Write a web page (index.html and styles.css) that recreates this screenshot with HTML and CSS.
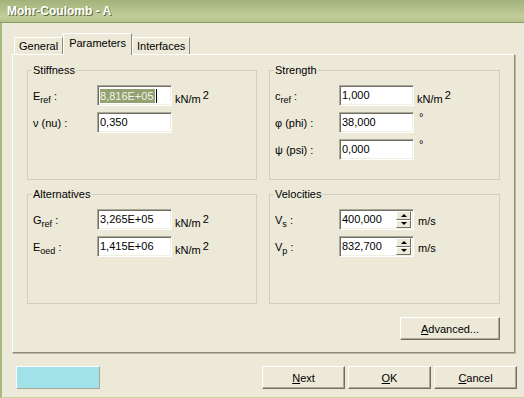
FILE: index.html
```html
<!DOCTYPE html>
<html lang="en">
<head>
    <meta charset="UTF-8">
    <title>Mohr-Coulomb - A</title>
    <link rel="stylesheet" href="styles.css">
</head>
<body>
    <div class="window">
        <div class="titlebar">
            <span class="title">Mohr-Coulomb - A</span>
        </div>
        <div class="frame">
            <div class="tabs">
                <div class="tab">General</div>
                <div class="tab active">Parameters</div>
                <div class="tab">Interfaces</div>
            </div>
            <div class="panel">
                <div class="groups">
                    <div class="group">
                        <div class="group-title">Stiffness</div>
                        <div class="row">
                            <span class="label">E<sub>ref</sub> :</span>
                            <span class="field"><span class="selected">8,816E+05</span><span class="caret"></span></span>
                            <span class="unit">kN/m<sup>2</sup></span>
                        </div>
                        <div class="row">
                            <span class="label">&nu; (nu) :</span>
                            <span class="field">0,350</span>
                        </div>
                    </div>
                    <div class="group">
                        <div class="group-title">Strength</div>
                        <div class="row">
                            <span class="label">c<sub>ref</sub> :</span>
                            <span class="field">1,000</span>
                            <span class="unit">kN/m<sup>2</sup></span>
                        </div>
                        <div class="row">
                            <span class="label">&phi; (phi) :</span>
                            <span class="field">38,000</span>
                            <span class="unit degree">&deg;</span>
                        </div>
                        <div class="row">
                            <span class="label">&psi; (psi) :</span>
                            <span class="field">0,000</span>
                            <span class="unit degree">&deg;</span>
                        </div>
                    </div>
                    <div class="group">
                        <div class="group-title">Alternatives</div>
                        <div class="row">
                            <span class="label">G<sub>ref</sub> :</span>
                            <span class="field">3,265E+05</span>
                            <span class="unit">kN/m<sup>2</sup></span>
                        </div>
                        <div class="row">
                            <span class="label">E<sub>oed</sub> :</span>
                            <span class="field">1,415E+06</span>
                            <span class="unit">kN/m<sup>2</sup></span>
                        </div>
                    </div>
                    <div class="group">
                        <div class="group-title">Velocities</div>
                        <div class="row">
                            <span class="label">V<sub>s</sub> :</span>
                            <span class="field">400,000
                                <span class="spin"><span class="spin-btn up"></span><span class="spin-btn down"></span></span>
                            </span>
                            <span class="unit plain">m/s</span>
                        </div>
                        <div class="row">
                            <span class="label">V<sub>p</sub> :</span>
                            <span class="field">832,700
                                <span class="spin"><span class="spin-btn up"></span><span class="spin-btn down"></span></span>
                            </span>
                            <span class="unit plain">m/s</span>
                        </div>
                    </div>
                </div>
                <div class="panel-actions">
                    <button class="btn btn-wide"><u>A</u>dvanced...</button>
                </div>
            </div>
            <div class="footer">
                <div class="swatch"></div>
                <div class="buttons">
                    <button class="btn"><u>N</u>ext</button>
                    <button class="btn"><u>O</u>K</button>
                    <button class="btn"><u>C</u>ancel</button>
                </div>
            </div>
        </div>
    </div>
</body>
</html>
```

FILE: styles.css
```css
body {
    margin: 0;
    background-color: #ece9d8;
    font-family: 'Liberation Sans', Tahoma, sans-serif;
    font-size: 11px;
    color: #000;
}
.window {
    width: 524px;
    height: 398px;
    display: flex;
    flex-direction: column;
    overflow: hidden;
}
.titlebar {
    height: 22px;
    border-bottom: 1px solid #8b9b63;
    background: linear-gradient(#a2b27a, #b3c08a 40%, #c3cd9b 75%, #b5c28c);
    display: flex;
    align-items: center;
    padding-left: 7px;
}
.title {
    color: #fff;
    font-weight: bold;
    font-size: 12px;
    text-shadow: 1px 1px #5e6c3e;
}
.frame {
    flex: 1;
    border-left: 2px solid #a8b97f;
    border-bottom: 1px solid #c9d1a3;
    padding: 10px 7px 0 10px;
    display: flex;
    flex-direction: column;
}
.tabs {
    display: flex;
    align-items: flex-end;
    height: 21px;
    padding-left: 2px;
    position: relative;
    z-index: 1;
}
.tab {
    height: 16px;
    line-height: 16px;
    padding: 0 4px;
    border: 1px solid #fff;
    border-right-color: #8c8c7c;
    border-bottom: none;
}
.tab.active {
    height: 21px;
    line-height: 19px;
    margin-bottom: -1px;
    background-color: #ece9d8;
    padding: 0 5px;
}
.panel {
    width: 503px;
    height: 299px;
    box-sizing: border-box;
    border: 1px solid #fff;
    border-right-color: #8c8c7c;
    border-bottom-color: #8c8c7c;
    box-shadow: 1px 1px #bdb9a6;
    padding: 15px 14px 0 14px;
}
.groups {
    display: grid;
    grid-template-columns: 230px 231px;
    grid-template-rows: 110px 110px;
    column-gap: 12px;
    row-gap: 14px;
}
.group {
    border: 1px solid #d0d0bf;
    padding: 0 5px;
    display: flex;
    flex-direction: column;
    gap: 6px;
}
.group-title {
    align-self: flex-start;
    margin: -7px 0 2px -1px;
    padding: 0 1px;
    line-height: 13px;
    background-color: #ece9d8;
}
.row {
    display: flex;
    height: 21px;
}
.label {
    width: 64px;
    align-self: center;
}
sub {
    font-size: 9px;
    vertical-align: -3px;
    line-height: 0;
}
.field {
    width: 75px;
    height: 21px;
    box-sizing: border-box;
    border: 1px solid #aca899;
    border-right-color: #fff;
    border-bottom-color: #fff;
    box-shadow: inset 1px 1px #716f64, inset -1px -1px #f1efe2;
    background-color: #fff;
    padding: 0 2px;
    line-height: 19px;
    display: flex;
    align-items: center;
}
.selected {
    background-color: #93a070;
    color: #f4f4ec;
    line-height: 14px;
    padding-right: 1px;
}
.caret {
    width: 1px;
    height: 14px;
    margin-left: 1px;
    background-color: #000;
}
.unit {
    margin-left: 3px;
    align-self: flex-end;
    line-height: 13px;
}
.unit sup {
    font-size: 11px;
    vertical-align: 4px;
    line-height: 0;
    margin-left: 2px;
}
.unit.degree {
    align-self: flex-start;
    margin-left: 5px;
    line-height: 11px;
}
.unit.plain {
    margin-left: 4px;
    align-self: center;
    padding-top: 4px;
}
.spin {
    margin-left: auto;
    width: 15px;
    height: 17px;
    display: flex;
    flex-direction: column;
}
.spin-btn {
    flex: 1;
    box-sizing: border-box;
    background-color: #ece9d8;
    border: 1px solid #fff;
    border-right-color: #716f64;
    border-bottom-color: #716f64;
    display: flex;
    align-items: center;
    justify-content: center;
}
.spin-btn::after {
    content: '';
    border-left: 3px solid transparent;
    border-right: 3px solid transparent;
}
.spin-btn.up::after {
    border-bottom: 3px solid #000;
}
.spin-btn.down::after {
    border-top: 3px solid #000;
}
.panel-actions {
    display: flex;
    justify-content: flex-end;
    margin-top: 13px;
}
.btn {
    width: 83px;
    height: 23px;
    padding: 0;
    font-family: inherit;
    font-size: 11px;
    color: #000;
    background-color: #ece9d8;
    border: 1px solid #fff;
    border-right-color: #716f64;
    border-bottom-color: #716f64;
    box-shadow: inset -1px -1px #aca899;
    border-radius: 0;
}
.btn-wide {
    width: 100px;
}
.footer {
    display: flex;
    align-items: center;
    margin-top: 13px;
}
.swatch {
    width: 84px;
    height: 23px;
    box-sizing: border-box;
    margin-left: 4px;
    background-color: #a0e2e8;
    border: 1px solid #fff;
    border-right-color: #aca899;
    border-bottom-color: #aca899;
}
.buttons {
    margin-left: auto;
    display: flex;
    gap: 3px;
}
```
